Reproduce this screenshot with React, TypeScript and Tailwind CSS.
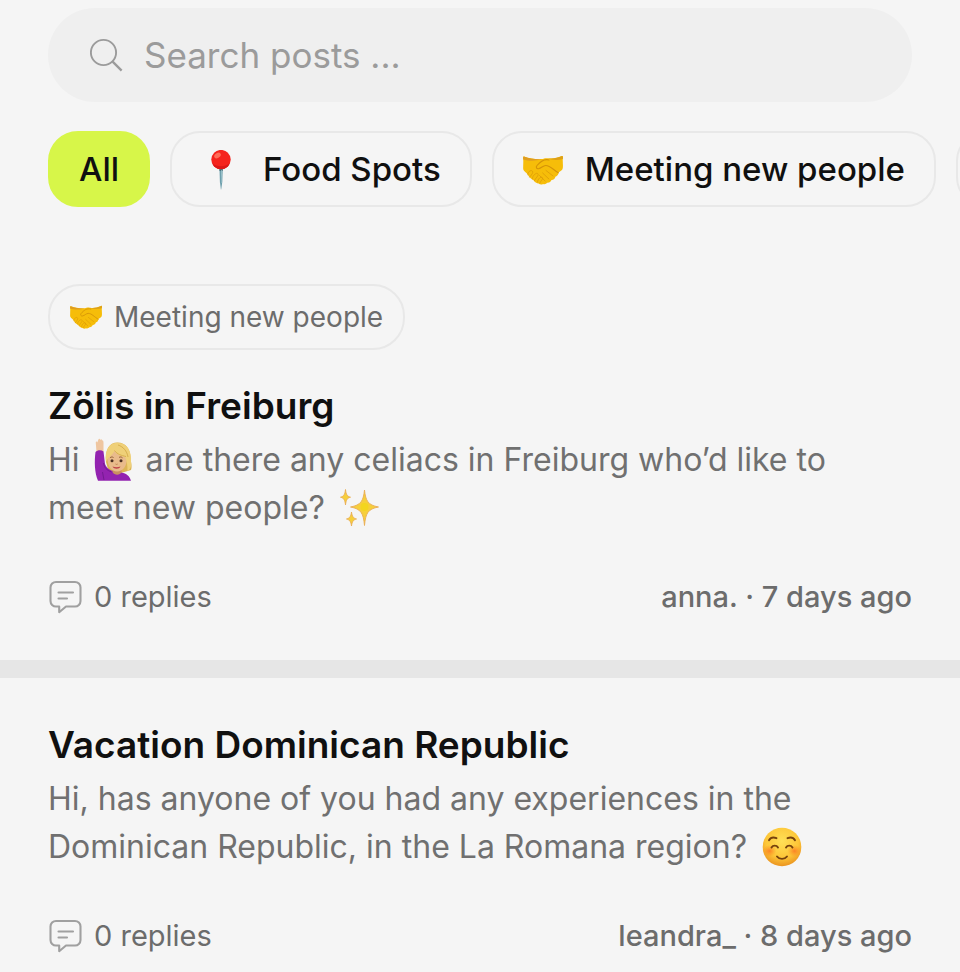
import React, { useState } from "react";

type IconProps = { className?: string };

function SearchIcon({ className }: IconProps) {
  return (
    <svg viewBox="1 0 34 34" fill="none" stroke="currentColor" strokeWidth="1.9" className={className} aria-hidden="true">
      <circle cx="14.5" cy="14.5" r="12.6" />
      <path d="M23.6 23.6 32.6 32.6" strokeWidth="2.3" />
    </svg>
  );
}

function CommentIcon({ className }: IconProps) {
  return (
    <svg
      viewBox="-1 0 34 34"
      fill="none"
      stroke="currentColor"
      strokeWidth="2.1"
      strokeLinejoin="round"
      strokeLinecap="round"
      className={className}
      aria-hidden="true"
    >
      <path d="M7 2h19a5.500 5.500 0 0 1 5.500 5.500v13.500a5.500 5.500 0 0 1-5.500 5.500H17L10.200 32.200V26.500H7a5.500 5.500 0 0 1-5.500-5.500V7.500A5.500 5.500 0 0 1 7 2Z" />
      <path d="M9.500 12.500h14.500M9.500 18.500h8.500" />
    </svg>
  );
}

function PinEmoji({ className }: IconProps) {
  return (
    <svg viewBox="0 0 40 40" className={className} aria-hidden="true">
      <path d="M18.400 17h3.400l-.5 15-1.100 7.500h-.3L18.900 32Z" fill="#6d9fac" />
      <path d="M18.400 17h3.400l-.1 4h-3.200Z" fill="#47707c" />
      <path d="M20.300 20h.8l-.3 13h-.4Z" fill="#a9ccd4" />
      <circle cx="20" cy="9.600" r="9.700" fill="#f5231d" />
      <path d="M11 13a9.700 9.700 0 0 0 18 0c-4 4-13 4.500-18 0Z" fill="#dc1717" />
      <ellipse cx="16.500" cy="5.500" rx="3.600" ry="2.400" transform="rotate(-35 16.500 5.500)" fill="#ff6c58" />
    </svg>
  );
}

function HandshakeEmoji({ className }: IconProps) {
  return (
    <svg viewBox="0 -1 40 40" className={className} aria-hidden="true">
      <path
        d="M1 5.500C.2 5.300-.1 6 .1 7c.6 4.500-.3 9 .2 11.500C.7 20.400 3.500 21.500 5 24c1.200 2.600 3.300 4 5.300 5 1.300 2.200 3.500 3.500 5.300 3.600 1.500 1.200 3.300 1.200 4.400.4 1.700.7 3.300 0 4.200-1.200 2.200.2 3.600-1 4.300-2.700 2.300-.2 3.600-1.700 3.900-3.400 2.300-.5 3-2.300 3.100-4.200 2-1.300 4.100-2.300 4.300-4.500.5-3-.4-6.500.1-10.500.2-1-.3-1.700-1.100-1.400-4.800 2.200-9.300 3-14.200 2.200-2.600-.5-4.300.6-6.300.8C12.300 8.300 6 7.500 1 5.500Z"
        fill="#f6bd09"
      />
      <path d="M1 5.500C7.500 8 13.500 8.500 18.300 8.100 13 10.500 5 10 .2 8.500 0 7 0 5.200 1 5.500Z" fill="#df9d20" />
      <path d="M39 5.100c-4.800 2.200-9.300 3-14.200 2.200 4.500 2.200 10.500 2.100 15 .7.300-1.600.1-3.100-.8-2.900Z" fill="#dda018" />
      <path
        d="M26 9c-5-1.500-9 2-12 5.500-1.500 1.800-.3 3.500 1.500 3.200 3-.5 4.300-3 7.200-3.200 4.300-.1 7.800 4.500 12.600 7.300"
        fill="none"
        stroke="#d49308"
        strokeWidth="1.100"
        strokeLinecap="round"
      />
      <path
        d="M23 19.500l7 5.500M19.600 22l6.300 6M16.500 24.500l5.600 5.500M5 24c-1-2.500 2.600-5.500 4.300-4 1.500 1.400-1.300 4.400-2.600 6.100M9.500 28c-.8-2.700 3.700-7 5.300-5.300 1.600 1.700-2.600 4.500-3.300 6.900M14.500 31c0-2.500 3.300-6 4.800-4.500 1.400 1.500-2 3.300-2.400 5.600"
        fill="none"
        stroke="#dc9c08"
        strokeWidth=".8"
        strokeLinecap="round"
      />
    </svg>
  );
}

function RaisingHandEmoji({ className }: IconProps) {
  return (
    <svg viewBox="0 0 40 44" className={className} role="img" aria-label="Woman raising hand">
      <path d="M13 24c-1-12 3-19.500 11.500-19.500C33 4.500 37 11 37.500 19c.3 5 2 9.500.5 13l-10 3H16Z" fill="#dcb555" />
      <path d="M3.500 14 2.800 5c-.1-1.800 1.100-1.800 1.500-.5L5.300 1.800c.4-1.300 1.700-1.200 1.900.1.500-1 1.800-.8 1.900.4 1 0 1.300.8 1.400 2.100L10.500 14Z" fill="#efc6a0" />
      <path d="M2.500 14c2-2 5.500-2.300 8-.5l1.500 12.500C14 31 18 33.200 25 34c6 .5 11 2 13 8.700H5C1.500 35 1.300 23 2.500 14Z" fill="#9323b0" />
      <path d="M10.500 25c1 5 3 7 8 9M9.500 34l1.500 8" fill="none" stroke="#741a92" strokeWidth="1" />
      <path d="M19.500 30h9v4c-1.500 3.500-7 3.500-9 0Z" fill="#c98f60" />
      <path d="M14.500 20c0-7 4-11 9.500-11s10 4 10 11c0 8.500-4.500 13.500-10 13.500s-9.500-5-9.500-13.500Z" fill="#e9bb8b" />
      <path d="M13 24c-1.500-10 2-19 11-19.300C34 4.500 39 13 38 24c.5 4 0 7-3.500 9 0-5-.3-10-2.500-14-4.500-.5-8.500-3-10.500-6-2 4-6.500 6-8.500 11Z" fill="#efd078" />
      <path d="M21.500 12.500c3 4 7 5 11.500 6M25 7c5 1.500 9 6 10 12" fill="none" stroke="#d4aa49" strokeWidth=".9" />
      <path d="M17 19.800c1-1 2.500-1 3.500-.3M26 19.500c1-.8 2.500-.7 3.500.3" fill="none" stroke="#946134" strokeWidth="1" />
      <circle cx="19" cy="22.800" r="1.500" fill="#4b3022" />
      <circle cx="28" cy="22.800" r="1.500" fill="#4b3022" />
      <path d="M22.500 26c.7.600 1.500.600 2.200 0" fill="none" stroke="#bf7f50" strokeWidth="1" />
      <path d="M19.500 28.500c2.500.9 5.500.9 8 0-1.200 3-6.500 3-8 0Z" fill="#bf4249" />
    </svg>
  );
}

function SparklesEmoji({ className }: IconProps) {
  return (
    <svg viewBox="0 0 40 40" className={className} role="img" aria-label="Sparkles">
      <g fill="#f6cf3b" stroke="#e9ad55" strokeWidth=".9" strokeLinejoin="round">
        <path d="M24.500 2c1.200 11 3.500 15 14 17-10.500 2-12.800 6-14 18.500C23.300 25 21 21 10.500 19c10.500-2 12.800-6 14-17Z" />
        <path d="M5.500 1.500c.6 5.200 1.700 6.800 5 7.700-3.300.9-4.400 2.500-5 7.700-.6-5.200-1.700-6.800-5-7.700 3.300-.9 4.400-2.500 5-7.700Z" />
        <path d="M11.500 24c.6 4.500 1.700 6.100 5 7-3.300.9-4.400 2.500-5 7-.6-4.500-1.700-6.100-5-7 3.300-.9 4.400-2.500 5-7Z" />
      </g>
      <circle cx="24.500" cy="19" r="4" fill="#f3d51e" />
    </svg>
  );
}

function SmilingEmoji({ className }: IconProps) {
  return (
    <svg viewBox="0 0 40 40" className={className} role="img" aria-label="Smiling face">
      <defs>
        <radialGradient id="face" cx="50%" cy="35%" r="65%">
          <stop offset="0" stopColor="#ffe057" />
          <stop offset=".65" stopColor="#fdc638" />
          <stop offset="1" stopColor="#eb9420" />
        </radialGradient>
        <radialGradient id="blush">
          <stop offset="0" stopColor="#fb7622" stopOpacity=".85" />
          <stop offset="1" stopColor="#fb8b22" stopOpacity="0" />
        </radialGradient>
      </defs>
      <circle cx="20" cy="20" r="19.300" fill="url(#face)" />
      <ellipse cx="7.500" cy="24" rx="7" ry="6" fill="url(#blush)" />
      <ellipse cx="32.500" cy="24" rx="7" ry="6" fill="url(#blush)" />
      <g fill="none" stroke="#76420d" strokeWidth="1.900" strokeLinecap="round">
        <path d="M7 13.200c1.500-2.500 4.500-3.300 7.500-2M25.500 11.200c3-1.300 6-.5 7.500 2" />
        <path d="M9.500 20.500c1.500-2.500 5-2.500 6.500 0M24 20.500c1.500-2.500 5-2.500 6.500 0" />
        <path d="M15 29.500c2.500 3.200 7.500 3.200 10 0" />
      </g>
    </svg>
  );
}

const categories = [
  { id: 1, title: "All", Icon: null },
  { id: 2, title: "Food Spots", Icon: PinEmoji },
  { id: 3, title: "Meeting new people", Icon: HandshakeEmoji },
];

const posts = [
  {
    id: 1,
    category: "Meeting new people",
    title: "Zölis in Freiburg",
    body: (
      <>
        Hi <RaisingHandEmoji className="mx-1 -mt-1 inline-block h-11 w-10 align-middle" /> are there any celiacs in
        Freiburg who’d like to meet new people?{" "}
        <SparklesEmoji className="-mt-1 ml-1.5 inline-block size-10 align-middle" />
      </>
    ),
    replies: 0,
    author: "anna.",
    age: "7 days ago",
  },
  {
    id: 2,
    title: "Vacation Dominican Republic",
    body: (
      <>
        Hi, has anyone of you had any experiences in the Dominican Republic, in the La Romana region?{" "}
        <SmilingEmoji className="-mt-1 ml-1.5 inline-block size-10 align-middle" />
      </>
    ),
    replies: 0,
    author: "leandra_",
    age: "8 days ago",
  },
];

function Post({ post }: { post: (typeof posts)[number] }) {
  return (
    <article className="px-12 py-[43px]">
      {post.category ? (
        <div className="mb-8 inline-flex h-[66px] items-center gap-3 rounded-[32px] border-2 border-[#e8e8e8] px-5 text-[28px] text-[#6c6c6c]">
          <HandshakeEmoji className="size-8" />
          <span>{post.category}</span>
        </div>
      ) : (
        ""
      )}
      <h2 className="text-[37px] leading-12 font-semibold text-[#101010]">{post.title}</h2>
      <p className="mt-1.5 pr-16 text-[32px] leading-12 text-[#707070]">{post.body}</p>
      <div className="mt-[45px] flex h-10 items-center justify-between text-[29px] text-[#6c6c6c]">
        <a href="#replies" className="flex items-center gap-3">
          <CommentIcon className="size-[34px] text-[#a0a0a0]" />
          {post.replies} replies
        </a>
        <p className="font-medium">
          {post.author} · {post.age}
        </p>
      </div>
    </article>
  );
}

export default function App() {
  const [active, setActive] = useState(1);
  const [query, setQuery] = useState("");

  return (
    <main className="min-h-screen overflow-hidden bg-[#f5f5f5] pt-2 font-['Inter',sans-serif]">
      <div className="px-12">
        <label className="flex h-[94px] items-center gap-5 rounded-full bg-[#efefef] px-[42px]">
          <SearchIcon className="size-[34px] shrink-0 text-[#9b9b9b]" />
          <input
            type="search"
            aria-label="Search posts"
            placeholder="Search posts ..."
            value={query}
            onChange={(e) => setQuery(e.target.value)}
            className="w-full bg-transparent text-[35px] text-[#333333] outline-none placeholder:text-[#9b9b9b]"
          />
        </label>
      </div>

      <nav className="mt-[29px] mb-[34px] flex gap-5 overflow-hidden pl-12">
        {categories.map(({ id, title, Icon }) => (
          <button
            key={id}
            onClick={() => setActive(id)}
            className={`flex h-[76px] shrink-0 items-center gap-[22px] rounded-[30px] border-2 px-[29px] pt-0.5 text-[33px] font-medium text-[#101010] ${
              active === id ? "border-[#d7f649] bg-[#d7f649]" : "border-[#e8e8e8]"
            }`}
          >
            {Icon ? <Icon className="size-10" /> : ""}
            {title}
          </button>
        ))}
        <button
          aria-label="More topics"
          className="h-[76px] w-40 shrink-0 rounded-[30px] border-2 border-[#e8e8e8]"
        />
      </nav>

      <div className="divide-y-[18px] divide-[#e6e6e6]">
        {posts.map((post) => (
          <Post key={post.id} post={post} />
        ))}
      </div>
    </main>
  );
}
